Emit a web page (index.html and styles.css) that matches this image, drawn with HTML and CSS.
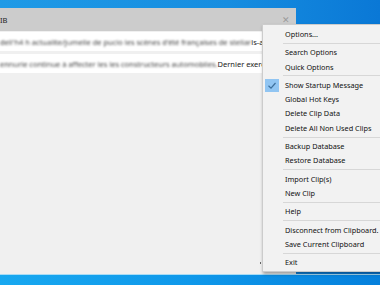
FILE: index.html
```html
<!DOCTYPE html>
<html lang="fr">
<head>
  <meta charset="UTF-8" />
  <title>Ditto</title>
  <link rel="stylesheet" href="styles.css">
</head>
<body>
  <div class="desktop">
    <div class="window">
      <div class="titlebar">
        <span class="title">IB</span>
        <span class="close">&#x2715;</span>
      </div>
      <div class="clips">
        <div class="clip">
          <span class="blur">dell'h4 h actualite/jumelle de pucio les scènes d'été françaises de stellar</span><span class="sharp">is-a</span>
        </div>
        <div class="clip">
          <span class="blur">ennurie continue à affecter les les constructeurs automobiles.</span><span class="sharp"> Dernier exercice</span>
        </div>
      </div>
      <div class="grip"></div>
    </div>
    <div class="desk-bottom"></div>

    <div class="menu">
      <div class="item">Options...</div>
      <div class="sep"></div>
      <div class="item">Search Options</div>
      <div class="item">Quick Options</div>
      <div class="sep"></div>
      <div class="item checked">
        <span class="check">
          <svg width="14" height="13" viewBox="0 0 14 13"><path d="M3.5 6.8 L6 9.2 L10.5 4" fill="none" stroke="#3d6f9c" stroke-width="1.2"/></svg>
        </span>Show Startup Message
      </div>
      <div class="item">Global Hot Keys</div>
      <div class="item">Delete Clip Data</div>
      <div class="item">Delete All Non Used Clips</div>
      <div class="sep"></div>
      <div class="item">Backup Database</div>
      <div class="item">Restore Database</div>
      <div class="sep"></div>
      <div class="item">Import Clip(s)</div>
      <div class="item">New Clip</div>
      <div class="sep"></div>
      <div class="item">Help</div>
      <div class="sep"></div>
      <div class="item">Disconnect from Clipboard.</div>
      <div class="item">Save Current Clipboard</div>
      <div class="sep"></div>
      <div class="item">Exit</div>
    </div>
  </div>
</body>
</html>
```

FILE: styles.css
```css
body {
  margin: 0;
  font-family: 'Noto Sans', sans-serif;
  overflow: hidden;
}
.desktop {
  position: relative;
  width: 380px;
  height: 285px;
  padding-top: 8px;
  box-sizing: border-box;
  background: linear-gradient(90deg, #1f9ae6 0%, #168de0 60%, #0a78d6 100%);
}
.window {
  position: relative;
  width: 296px;
  height: 266px;
  background: #f0f0f0;
  display: flex;
  flex-direction: column;
}
.titlebar {
  height: 23px;
  background: #cccccc;
  display: flex;
  align-items: center;
  justify-content: space-between;
  padding-right: 6px;
}
.title {
  font-size: 7.5px;
  color: #222;
}
.close {
  font-size: 9px;
  color: #9a9a9a;
}
.clips {
  display: flex;
  flex-direction: column;
  gap: 3px;
  padding-top: 1px;
}
.clip {
  height: 19px;
  background: #fff;
  display: flex;
  align-items: center;
  white-space: nowrap;
  overflow: hidden;
  font-size: 7.5px;
  color: #222;
}
.clip .blur {
  filter: blur(0.9px);
  color: #444;
}
.grip {
  position: absolute;
  left: 260px;
  bottom: 10px;
  width: 1px;
  height: 2px;
  background: #666;
}
.desk-bottom {
  height: 11px;
  background: linear-gradient(90deg, #18a8f0 0%, #0f98ea 50%, #0580dc 100%);
  border-top: 1px solid #a8dcf5;
}
.menu {
  position: absolute;
  left: 262px;
  top: 24px;
  width: 130px;
  padding: 2px 0 2px;
  background: #f2f2f2;
  border: 1px solid #cccccc;
  box-shadow: 1px 2px 3px rgba(0, 0, 0, 0.35);
  display: flex;
  flex-direction: column;
  font-size: 7.3px;
  color: #111;
}
.item {
  height: 14.3px;
  line-height: 14.3px;
  padding-left: 22px;
  white-space: nowrap;
  position: relative;
}
.check {
  position: absolute;
  left: 2px;
  top: 1px;
  width: 14px;
  height: 13px;
  background: #91c5f2;
  display: flex;
}
.sep {
  height: 1px;
  margin: 1.5px 0 1.5px 20px;
  background: #d7d7d7;
}
```
